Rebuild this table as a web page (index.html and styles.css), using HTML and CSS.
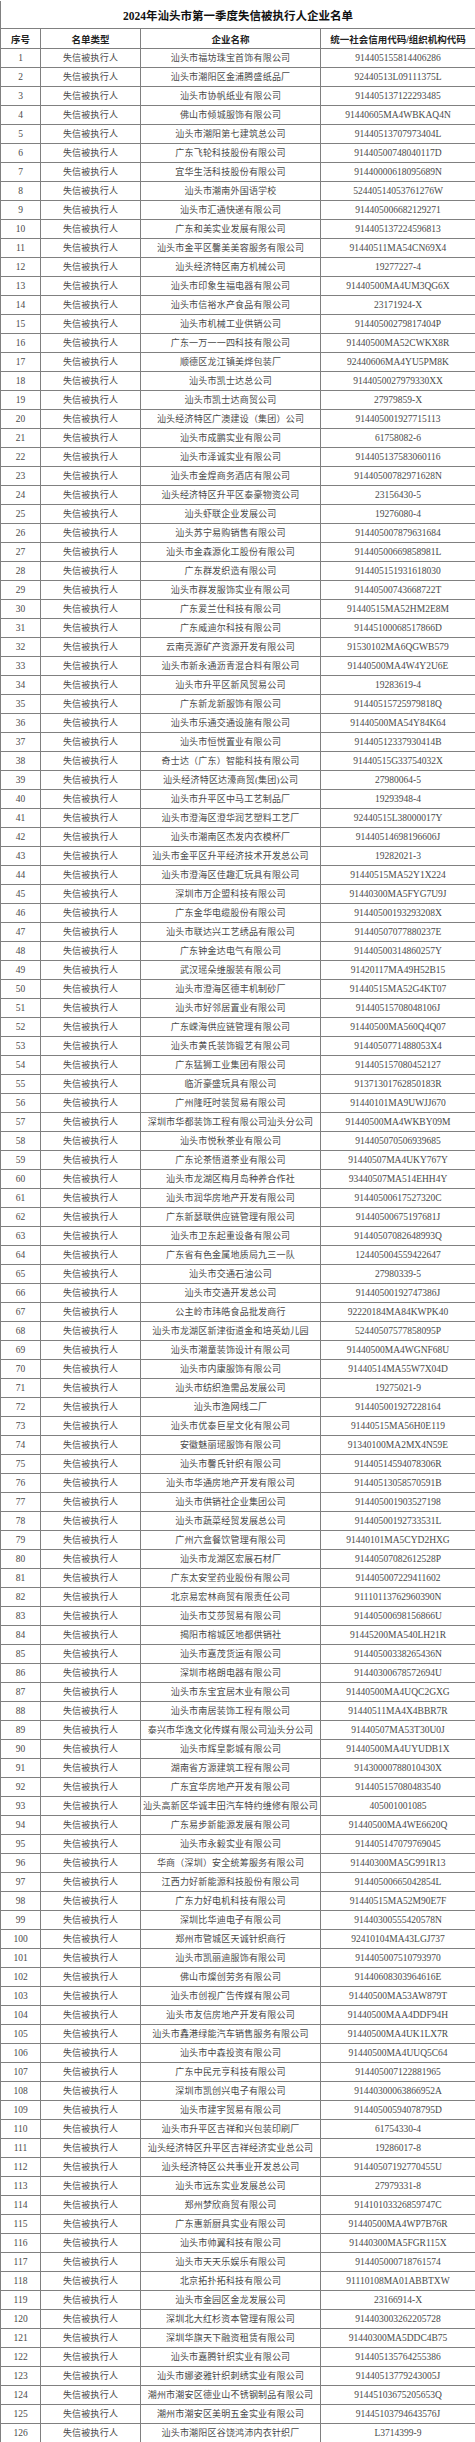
FILE: index.html
```html
<!DOCTYPE html>
<html lang="zh-CN">
<head>
<meta charset="utf-8">
<title>2024年汕头市第一季度失信被执行人企业名单</title>
<link rel="stylesheet" href="styles.css">
</head>
<body>
<table class="list">
<colgroup><col class="c-no"><col class="c-type"><col class="c-name"><col class="c-code"></colgroup>
<thead>
<tr class="title-row"><th colspan="4">2024年汕头市第一季度失信被执行人企业名单</th></tr>
<tr class="head-row"><th>序号</th><th>名单类型</th><th>企业名称</th><th>统一社会信用代码/组织机构代码</th></tr>
</thead>
<tbody>
<tr><td class="no">1</td><td>失信被执行人</td><td>汕头市福坊珠宝首饰有限公司</td><td class="code">914405155814406286</td></tr>
<tr><td class="no">2</td><td>失信被执行人</td><td>汕头市潮阳区金浦腾盛纸品厂</td><td class="code">92440513L09111375L</td></tr>
<tr><td class="no">3</td><td>失信被执行人</td><td>汕头市协帆纸业有限公司</td><td class="code">914405137122293485</td></tr>
<tr><td class="no">4</td><td>失信被执行人</td><td>佛山市倾城服饰有限公司</td><td class="code">91440605MA4WBKAQ4N</td></tr>
<tr><td class="no">5</td><td>失信被执行人</td><td>汕头市潮阳第七建筑总公司</td><td class="code">91440513707973404L</td></tr>
<tr><td class="no">6</td><td>失信被执行人</td><td>广东飞轮科技股份有限公司</td><td class="code">91440500748040117D</td></tr>
<tr><td class="no">7</td><td>失信被执行人</td><td>宜华生活科技股份有限公司</td><td class="code">91440000618095689N</td></tr>
<tr><td class="no">8</td><td>失信被执行人</td><td>汕头市潮南外国语学校</td><td class="code">52440514053761276W</td></tr>
<tr><td class="no">9</td><td>失信被执行人</td><td>汕头市汇通快递有限公司</td><td class="code">914405006682129271</td></tr>
<tr><td class="no">10</td><td>失信被执行人</td><td>广东和美实业发展有限公司</td><td class="code">914405137224596813</td></tr>
<tr><td class="no">11</td><td>失信被执行人</td><td>汕头市金平区馨美美容服务有限公司</td><td class="code">91440511MA54CN69X4</td></tr>
<tr><td class="no">12</td><td>失信被执行人</td><td>汕头经济特区南方机械公司</td><td class="code">19277227-4</td></tr>
<tr><td class="no">13</td><td>失信被执行人</td><td>汕头市印象生福电器有限公司</td><td class="code">91440500MA4UM3QG6X</td></tr>
<tr><td class="no">14</td><td>失信被执行人</td><td>汕头市信裕水产食品有限公司</td><td class="code">23171924-X</td></tr>
<tr><td class="no">15</td><td>失信被执行人</td><td>汕头市机械工业供销公司</td><td class="code">91440500279817404P</td></tr>
<tr><td class="no">16</td><td>失信被执行人</td><td>广东一万一一四科技有限公司</td><td class="code">91440500MA52CWKX8R</td></tr>
<tr><td class="no">17</td><td>失信被执行人</td><td>顺德区龙江镇美烨包装厂</td><td class="code">92440606MA4YU5PM8K</td></tr>
<tr><td class="no">18</td><td>失信被执行人</td><td>汕头市凯士达总公司</td><td class="code">9144050027979330XX</td></tr>
<tr><td class="no">19</td><td>失信被执行人</td><td>汕头市凯士达商贸公司</td><td class="code">27979859-X</td></tr>
<tr><td class="no">20</td><td>失信被执行人</td><td>汕头经济特区广澳建设（集团）公司</td><td class="code">914405001927715113</td></tr>
<tr><td class="no">21</td><td>失信被执行人</td><td>汕头市成鹏实业有限公司</td><td class="code">61758082-6</td></tr>
<tr><td class="no">22</td><td>失信被执行人</td><td>汕头市泽诚实业有限公司</td><td class="code">914405137583060116</td></tr>
<tr><td class="no">23</td><td>失信被执行人</td><td>汕头市金煌商务酒店有限公司</td><td class="code">91440500782971628N</td></tr>
<tr><td class="no">24</td><td>失信被执行人</td><td>汕头经济特区升平区泰豪物资公司</td><td class="code">23156430-5</td></tr>
<tr><td class="no">25</td><td>失信被执行人</td><td>汕头虾联企业发展公司</td><td class="code">19276080-4</td></tr>
<tr><td class="no">26</td><td>失信被执行人</td><td>汕头苏宁易购销售有限公司</td><td class="code">914405007879631684</td></tr>
<tr><td class="no">27</td><td>失信被执行人</td><td>汕头市金森源化工股份有限公司</td><td class="code">91440500669858981L</td></tr>
<tr><td class="no">28</td><td>失信被执行人</td><td>广东群发织造有限公司</td><td class="code">914405151931618030</td></tr>
<tr><td class="no">29</td><td>失信被执行人</td><td>汕头市群发服饰实业有限公司</td><td class="code">91440500743668722T</td></tr>
<tr><td class="no">30</td><td>失信被执行人</td><td>广东爱兰仕科技有限公司</td><td class="code">91440515MA52HM2E8M</td></tr>
<tr><td class="no">31</td><td>失信被执行人</td><td>广东威迪尔科技有限公司</td><td class="code">91445100068517866D</td></tr>
<tr><td class="no">32</td><td>失信被执行人</td><td>云南亮源矿产资源开发有限公司</td><td class="code">91530102MA6QGWB579</td></tr>
<tr><td class="no">33</td><td>失信被执行人</td><td>汕头市新永通沥青混合料有限公司</td><td class="code">91440500MA4W4Y2U6E</td></tr>
<tr><td class="no">34</td><td>失信被执行人</td><td>汕头市升平区新风贸易公司</td><td class="code">19283619-4</td></tr>
<tr><td class="no">35</td><td>失信被执行人</td><td>广东新龙新服饰有限公司</td><td class="code">91440515725979818Q</td></tr>
<tr><td class="no">36</td><td>失信被执行人</td><td>汕头市乐通交通设施有限公司</td><td class="code">91440500MA54Y84K64</td></tr>
<tr><td class="no">37</td><td>失信被执行人</td><td>汕头市恒悦置业有限公司</td><td class="code">91440512337930414B</td></tr>
<tr><td class="no">38</td><td>失信被执行人</td><td>奇士达（广东）智能科技有限公司</td><td class="code">91440515G33754032X</td></tr>
<tr><td class="no">39</td><td>失信被执行人</td><td>汕头经济特区达濠商贸(集团)公司</td><td class="code">27980064-5</td></tr>
<tr><td class="no">40</td><td>失信被执行人</td><td>汕头市升平区中马工艺制品厂</td><td class="code">19293948-4</td></tr>
<tr><td class="no">41</td><td>失信被执行人</td><td>汕头市澄海区澄华润艺塑料工艺厂</td><td class="code">92440515L38000017Y</td></tr>
<tr><td class="no">42</td><td>失信被执行人</td><td>汕头市潮南区杰发内衣模杯厂</td><td class="code">91440514698196606J</td></tr>
<tr><td class="no">43</td><td>失信被执行人</td><td>汕头市金平区升平经济技术开发总公司</td><td class="code">19282021-3</td></tr>
<tr><td class="no">44</td><td>失信被执行人</td><td>汕头市澄海区佳趣汇玩具有限公司</td><td class="code">91440515MA52Y1X224</td></tr>
<tr><td class="no">45</td><td>失信被执行人</td><td>深圳市万企盟科技有限公司</td><td class="code">91440300MA5FYG7U9J</td></tr>
<tr><td class="no">46</td><td>失信被执行人</td><td>广东金华电缆股份有限公司</td><td class="code">91440500193293208X</td></tr>
<tr><td class="no">47</td><td>失信被执行人</td><td>汕头市联达兴工艺绣品有限公司</td><td class="code">91440507077880237E</td></tr>
<tr><td class="no">48</td><td>失信被执行人</td><td>广东钟金达电气有限公司</td><td class="code">91440500314860257Y</td></tr>
<tr><td class="no">49</td><td>失信被执行人</td><td>武汉瑶朵维服装有限公司</td><td class="code">91420117MA49H52B15</td></tr>
<tr><td class="no">50</td><td>失信被执行人</td><td>汕头市澄海区德丰机制砂厂</td><td class="code">91440515MA52G4KT07</td></tr>
<tr><td class="no">51</td><td>失信被执行人</td><td>汕头市好邻居置业有限公司</td><td class="code">91440515708048106J</td></tr>
<tr><td class="no">52</td><td>失信被执行人</td><td>广东嵘海供应链管理有限公司</td><td class="code">91440500MA560Q4Q07</td></tr>
<tr><td class="no">53</td><td>失信被执行人</td><td>汕头市黄氏装饰锻艺有限公司</td><td class="code">9144050771488053X4</td></tr>
<tr><td class="no">54</td><td>失信被执行人</td><td>广东猛狮工业集团有限公司</td><td class="code">914405157080452127</td></tr>
<tr><td class="no">55</td><td>失信被执行人</td><td>临沂豪盛玩具有限公司</td><td class="code">91371301762850183R</td></tr>
<tr><td class="no">56</td><td>失信被执行人</td><td>广州隆旺时装贸易有限公司</td><td class="code">91440101MA9UWJJ670</td></tr>
<tr><td class="no">57</td><td>失信被执行人</td><td>深圳市华都装饰工程有限公司汕头分公司</td><td class="code">91440500MA4WKBY09M</td></tr>
<tr><td class="no">58</td><td>失信被执行人</td><td>汕头市悦秋茶业有限公司</td><td class="code">914405070506939685</td></tr>
<tr><td class="no">59</td><td>失信被执行人</td><td>广东论茶悟道茶业有限公司</td><td class="code">91440507MA4UKY767Y</td></tr>
<tr><td class="no">60</td><td>失信被执行人</td><td>汕头市龙湖区梅月岛种养合作社</td><td class="code">93440507MA514EHH4Y</td></tr>
<tr><td class="no">61</td><td>失信被执行人</td><td>汕头市润华房地产开发有限公司</td><td class="code">91440500617527320C</td></tr>
<tr><td class="no">62</td><td>失信被执行人</td><td>广东新瑟联供应链管理有限公司</td><td class="code">91440500675197681J</td></tr>
<tr><td class="no">63</td><td>失信被执行人</td><td>汕头市卫东起重设备有限公司</td><td class="code">91440507082648993Q</td></tr>
<tr><td class="no">64</td><td>失信被执行人</td><td>广东省有色金属地质局九三一队</td><td class="code">124405004559422647</td></tr>
<tr><td class="no">65</td><td>失信被执行人</td><td>汕头市交通石油公司</td><td class="code">27980339-5</td></tr>
<tr><td class="no">66</td><td>失信被执行人</td><td>汕头市交通开发总公司</td><td class="code">91440500192747386J</td></tr>
<tr><td class="no">67</td><td>失信被执行人</td><td>公主岭市玮皓食品批发商行</td><td class="code">92220184MA84KWPK40</td></tr>
<tr><td class="no">68</td><td>失信被执行人</td><td>汕头市龙湖区新津街道金和培英幼儿园</td><td class="code">52440507577858095P</td></tr>
<tr><td class="no">69</td><td>失信被执行人</td><td>汕头市潮童装饰设计有限公司</td><td class="code">91440500MA4WGNF68U</td></tr>
<tr><td class="no">70</td><td>失信被执行人</td><td>汕头市内康服饰有限公司</td><td class="code">91440514MA55W7X04D</td></tr>
<tr><td class="no">71</td><td>失信被执行人</td><td>汕头市纺织渔需品发展公司</td><td class="code">19275021-9</td></tr>
<tr><td class="no">72</td><td>失信被执行人</td><td>汕头市渔网线二厂</td><td class="code">914405001927228164</td></tr>
<tr><td class="no">73</td><td>失信被执行人</td><td>汕头市优泰巨星文化有限公司</td><td class="code">91440515MA56H0E119</td></tr>
<tr><td class="no">74</td><td>失信被执行人</td><td>安徽魅丽瑶服饰有限公司</td><td class="code">91340100MA2MX4N59E</td></tr>
<tr><td class="no">75</td><td>失信被执行人</td><td>汕头市馨氏针织有限公司</td><td class="code">91440514594078306R</td></tr>
<tr><td class="no">76</td><td>失信被执行人</td><td>汕头市华通房地产开发有限公司</td><td class="code">91440513058570591B</td></tr>
<tr><td class="no">77</td><td>失信被执行人</td><td>汕头市供销社企业集团公司</td><td class="code">914405001903527198</td></tr>
<tr><td class="no">78</td><td>失信被执行人</td><td>汕头市蔬菜经贸发展总公司</td><td class="code">91440500192733531L</td></tr>
<tr><td class="no">79</td><td>失信被执行人</td><td>广州六盒餐饮管理有限公司</td><td class="code">91440101MA5CYD2HXG</td></tr>
<tr><td class="no">80</td><td>失信被执行人</td><td>汕头市龙湖区宏展石材厂</td><td class="code">91440507082612528P</td></tr>
<tr><td class="no">81</td><td>失信被执行人</td><td>广东太安堂药业股份有限公司</td><td class="code">914405007229411602</td></tr>
<tr><td class="no">82</td><td>失信被执行人</td><td>北京易宏林商贸有限责任公司</td><td class="code">91110113762960390N</td></tr>
<tr><td class="no">83</td><td>失信被执行人</td><td>汕头市艾莎贸易有限公司</td><td class="code">91440500698156866U</td></tr>
<tr><td class="no">84</td><td>失信被执行人</td><td>揭阳市榕城区地都供销社</td><td class="code">91445200MA540LH21R</td></tr>
<tr><td class="no">85</td><td>失信被执行人</td><td>汕头市嘉茂货运有限公司</td><td class="code">91440500338265436N</td></tr>
<tr><td class="no">86</td><td>失信被执行人</td><td>深圳市格朗电器有限公司</td><td class="code">91440300678572694U</td></tr>
<tr><td class="no">87</td><td>失信被执行人</td><td>汕头市东宝宜居木业有限公司</td><td class="code">91440500MA4UQC2GXG</td></tr>
<tr><td class="no">88</td><td>失信被执行人</td><td>汕头市南居装饰工程有限公司</td><td class="code">91440511MA4X4BBR7R</td></tr>
<tr><td class="no">89</td><td>失信被执行人</td><td>泰兴市华逸文化传媒有限公司汕头分公司</td><td class="code">91440507MA53T30U0J</td></tr>
<tr><td class="no">90</td><td>失信被执行人</td><td>汕头市辉皇影城有限公司</td><td class="code">91440500MA4UYUDB1X</td></tr>
<tr><td class="no">91</td><td>失信被执行人</td><td>湖南省方源建筑工程有限公司</td><td class="code">91430000788010430X</td></tr>
<tr><td class="no">92</td><td>失信被执行人</td><td>广东宜华房地产开发有限公司</td><td class="code">914405157080483540</td></tr>
<tr><td class="no">93</td><td>失信被执行人</td><td>汕头高新区华诚丰田汽车特约维修有限公司</td><td class="code">405001001085</td></tr>
<tr><td class="no">94</td><td>失信被执行人</td><td>广东易步新能源发展有限公司</td><td class="code">91440500MA4WE6620Q</td></tr>
<tr><td class="no">95</td><td>失信被执行人</td><td>汕头市永毅实业有限公司</td><td class="code">914405147079769045</td></tr>
<tr><td class="no">96</td><td>失信被执行人</td><td>华商（深圳）安全统筹服务有限公司</td><td class="code">91440300MA5G991R13</td></tr>
<tr><td class="no">97</td><td>失信被执行人</td><td>江西力好新能源科技股份有限公司</td><td class="code">91440500665042854L</td></tr>
<tr><td class="no">98</td><td>失信被执行人</td><td>广东力好电机科技有限公司</td><td class="code">91440515MA52M90E7F</td></tr>
<tr><td class="no">99</td><td>失信被执行人</td><td>深圳比华迪电子有限公司</td><td class="code">91440300555420578N</td></tr>
<tr><td class="no">100</td><td>失信被执行人</td><td>郑州市管城区天诚针织商行</td><td class="code">92410104MA43LGJ737</td></tr>
<tr><td class="no">101</td><td>失信被执行人</td><td>汕头市凯丽迪服饰有限公司</td><td class="code">914405007510793970</td></tr>
<tr><td class="no">102</td><td>失信被执行人</td><td>佛山市燦创劳务有限公司</td><td class="code">91440608303964616E</td></tr>
<tr><td class="no">103</td><td>失信被执行人</td><td>汕头市创视广告传媒有限公司</td><td class="code">91440500MA53AW879T</td></tr>
<tr><td class="no">104</td><td>失信被执行人</td><td>汕头市友信房地产开发有限公司</td><td class="code">91440500MAA4DDF94H</td></tr>
<tr><td class="no">105</td><td>失信被执行人</td><td>汕头市鑫港绿能汽车销售服务有限公司</td><td class="code">91440500MA4UK1LX7R</td></tr>
<tr><td class="no">106</td><td>失信被执行人</td><td>汕头市中森投资有限公司</td><td class="code">91440500MA4UUQ5C64</td></tr>
<tr><td class="no">107</td><td>失信被执行人</td><td>广东中民元亨科技有限公司</td><td class="code">914405007122881965</td></tr>
<tr><td class="no">108</td><td>失信被执行人</td><td>深圳市凯创兴电子有限公司</td><td class="code">91440300063866952A</td></tr>
<tr><td class="no">109</td><td>失信被执行人</td><td>汕头市建宇贸易有限公司</td><td class="code">91440500594078795D</td></tr>
<tr><td class="no">110</td><td>失信被执行人</td><td>汕头市升平区吉祥和兴包装印刷厂</td><td class="code">61754330-4</td></tr>
<tr><td class="no">111</td><td>失信被执行人</td><td>汕头经济特区升平区吉祥经济实业总公司</td><td class="code">19286017-8</td></tr>
<tr><td class="no">112</td><td>失信被执行人</td><td>汕头经济特区公共事业开发总公司</td><td class="code">91440507192770455U</td></tr>
<tr><td class="no">113</td><td>失信被执行人</td><td>汕头市远东实业发展总公司</td><td class="code">27979331-8</td></tr>
<tr><td class="no">114</td><td>失信被执行人</td><td>郑州梦欣商贸有限公司</td><td class="code">91410103326859747C</td></tr>
<tr><td class="no">115</td><td>失信被执行人</td><td>广东惠新厨具实业有限公司</td><td class="code">91440500MA4WP7B76R</td></tr>
<tr><td class="no">116</td><td>失信被执行人</td><td>汕头市帅翼科技有限公司</td><td class="code">91440300MA5FGR115X</td></tr>
<tr><td class="no">117</td><td>失信被执行人</td><td>汕头市天天乐娱乐有限公司</td><td class="code">914405000718761574</td></tr>
<tr><td class="no">118</td><td>失信被执行人</td><td>北京拓扑拓科技有限公司</td><td class="code">91110108MA01ABBTXW</td></tr>
<tr><td class="no">119</td><td>失信被执行人</td><td>汕头市金园区金龙发展公司</td><td class="code">23166914-X</td></tr>
<tr><td class="no">120</td><td>失信被执行人</td><td>深圳北大红杉资本管理有限公司</td><td class="code">914403003262205728</td></tr>
<tr><td class="no">121</td><td>失信被执行人</td><td>深圳华旗天下融资租赁有限公司</td><td class="code">91440300MA5DDC4B75</td></tr>
<tr><td class="no">122</td><td>失信被执行人</td><td>汕头市嘉腾针织实业有限公司</td><td class="code">914405135764255386</td></tr>
<tr><td class="no">123</td><td>失信被执行人</td><td>汕头市娜姿雅针织刺绣实业有限公司</td><td class="code">91440513779243005J</td></tr>
<tr><td class="no">124</td><td>失信被执行人</td><td>潮州市潮安区德业山不锈钢制品有限公司</td><td class="code">91445103675205653Q</td></tr>
<tr><td class="no">125</td><td>失信被执行人</td><td>潮州市潮安区美明五金实业有限公司</td><td class="code">91445103794643576J</td></tr>
<tr><td class="no">126</td><td>失信被执行人</td><td>汕头市潮阳区谷饶鸿沛内衣针织厂</td><td class="code">L3714399-9</td></tr>
</tbody>
</table>
</body>
</html>
```
FILE: styles.css
```css
html, body {
  margin: 0;
  padding: 0;
  background: #ffffff;
}

.list {
  width: 475px;
  table-layout: fixed;
  border-collapse: collapse;
  font-family: "Liberation Serif", "Noto Sans CJK SC", serif;
  color: #4a4a4a;
}

.c-no { width: 40px; }
.c-type { width: 100px; }
.c-name { width: 180px; }
.c-code { width: 155px; }

.list th,
.list td {
  border: 1px solid #808080;
  padding: 0;
  text-align: center;
  vertical-align: middle;
  white-space: nowrap;
  overflow: hidden;
}

.title-row th {
  height: 27px;
  font-size: 11.5px;
  font-weight: bold;
  color: #111111;
  border-top-color: #ffffff;
}

.head-row th {
  height: 19px;
  font-size: 9.5px;
  font-weight: bold;
  color: #222222;
}

.list tbody td {
  height: 18px;
  font-size: 9px;
  line-height: 10px;
  letter-spacing: 0.2px;
}

.list tbody td.no,
.list tbody td.code {
  font-size: 9.5px;
  letter-spacing: 0;
}
```
